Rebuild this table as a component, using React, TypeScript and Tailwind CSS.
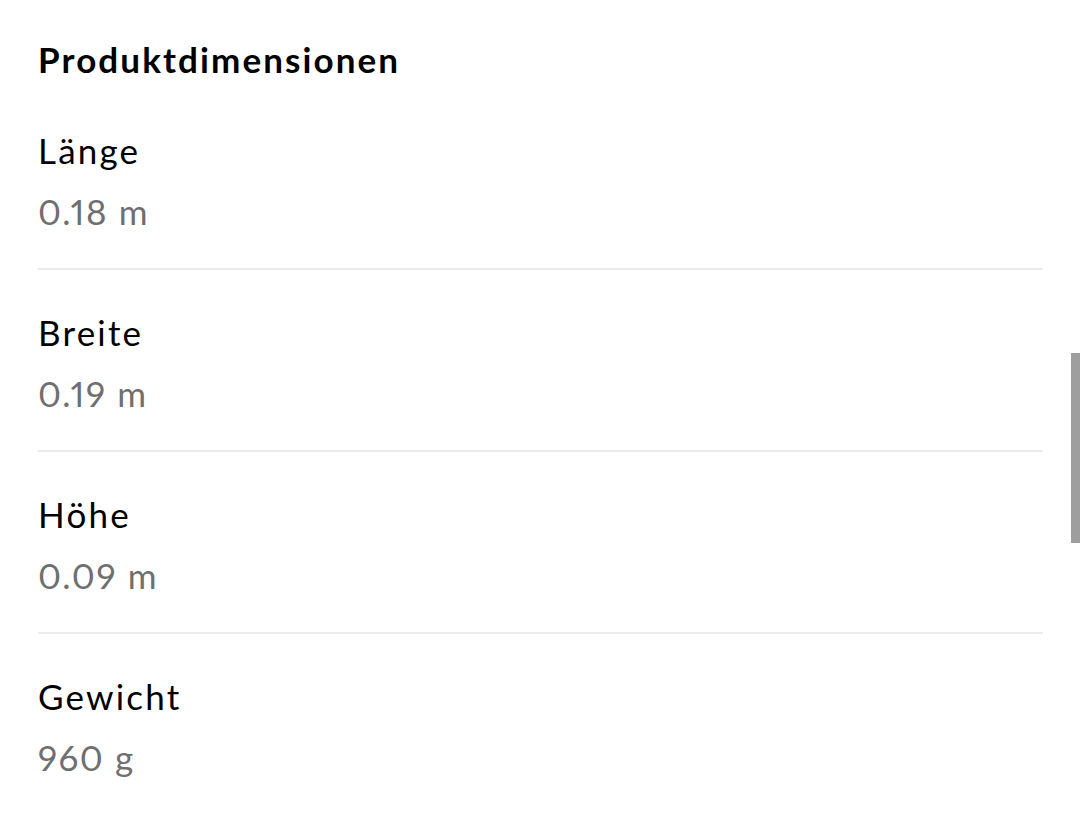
import React from "react";

const rows = [
  { label: "Länge", value: "0.18 m" },
  { label: "Breite", value: "0.19 m" },
  { label: "Höhe", value: "0.09 m" },
  { label: "Gewicht", value: "960 g" },
];

export default function App() {
  return (
    <div
      className="relative w-[1080px] h-[814px] bg-white overflow-hidden"
      style={{ fontFamily: "Lato, 'Noto Sans', sans-serif" }}
    >
      <div className="pl-[38px] pr-[37px] pt-[37px]">
        <h2 className="text-[35px] leading-[44px] font-bold tracking-[2.1px] text-black">Produktdimensionen</h2>
        <div className="mt-[7px]">
          {rows.map((r, i) => (
            <div
              key={r.label}
              className={
                "pt-[40px] pb-[35px] " + (i < rows.length - 1 ? "border-b-2 border-[#ececec]" : "")
              }
            >
              <div className="text-[35px] leading-[44px] tracking-[2.2px] text-black">{r.label}</div>
              <div className="mt-[17px] text-[35px] leading-[44px] tracking-[1.6px] proportional-nums text-[#6f6f6f]">{r.value}</div>
            </div>
          ))}
        </div>
      </div>
      <div className="absolute right-0 top-[353px] w-[9px] h-[190px] bg-[#9e9e9e]" />
    </div>
  );
}
